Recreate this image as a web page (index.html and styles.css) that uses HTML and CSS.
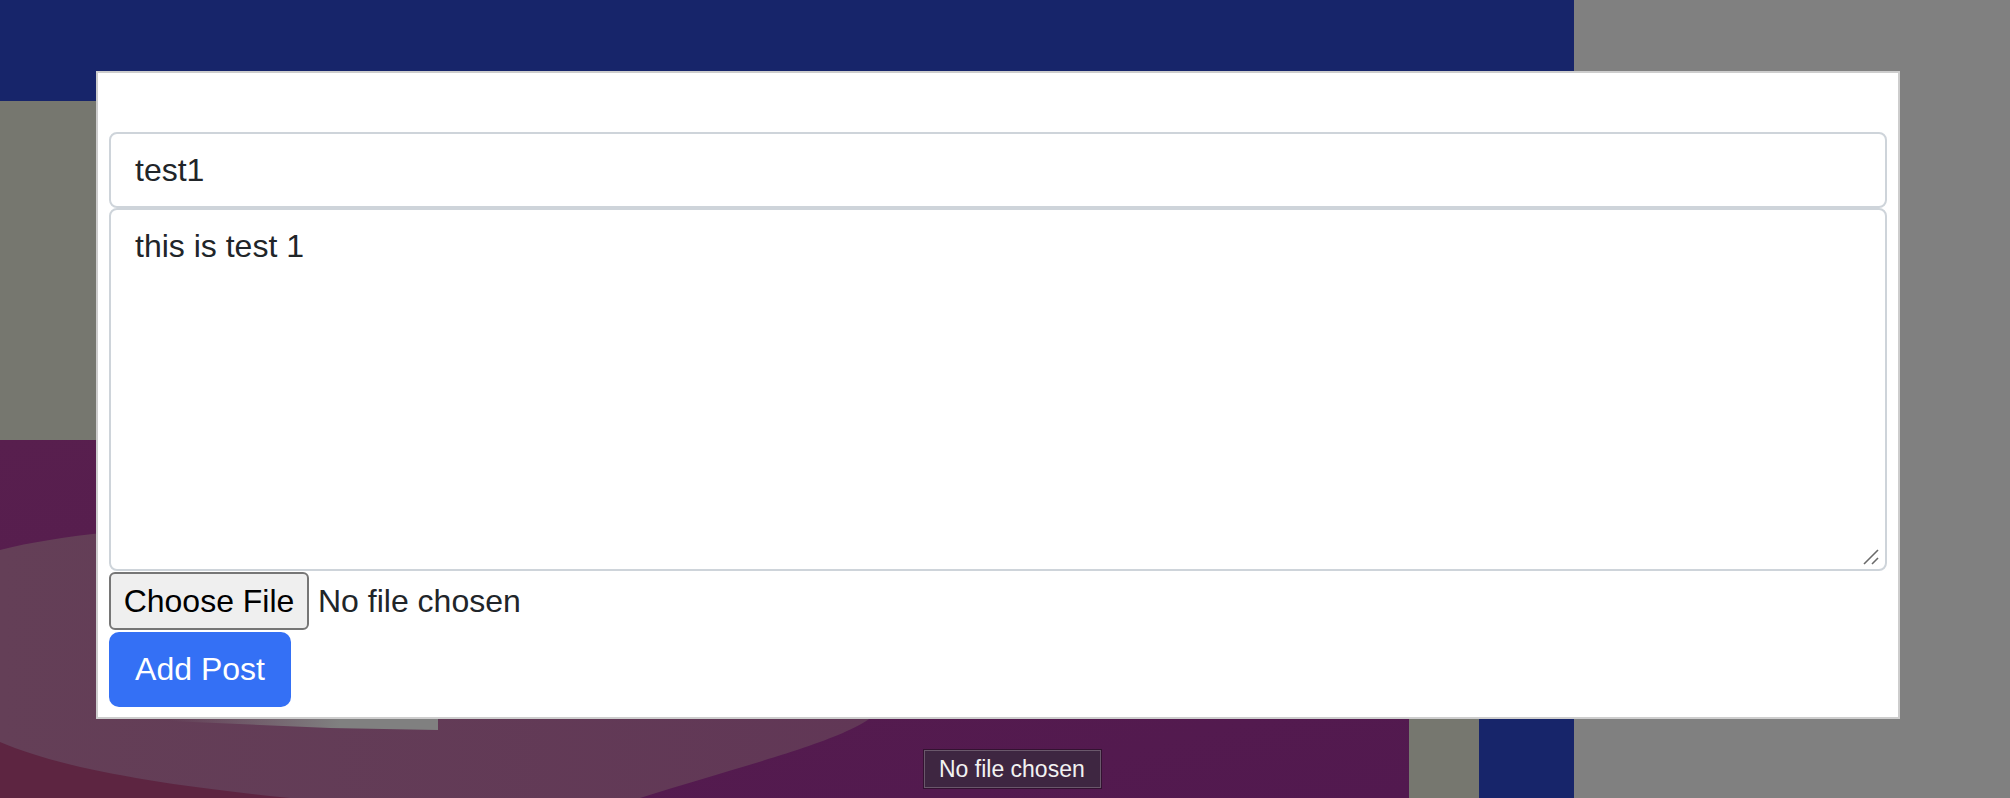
FILE: index.html
```html
<!DOCTYPE html>
<html lang="en">
<head>
<meta charset="utf-8">
<title>Add Post</title>
<link rel="stylesheet" href="styles.css">
</head>
<body>
  <div class="desktop">
    <div class="layer-navy">
      <div class="layer-olive">
        <div class="wallpaper">
          <svg class="wallpaper-art" viewBox="0 0 1409 358" width="1409" height="358" aria-hidden="true">
            <defs>
              <linearGradient id="bandGrad" x1="0" y1="0" x2="1" y2="0">
                <stop offset="0" stop-color="#643f57"/>
                <stop offset="1" stop-color="#613756"/>
              </linearGradient>
              <linearGradient id="patchGrad" x1="170" y1="0" x2="340" y2="0" gradientUnits="userSpaceOnUse">
                <stop offset="0" stop-color="#808080" stop-opacity="0"/>
                <stop offset="1" stop-color="#808080"/>
              </linearGradient>
              <linearGradient id="baseGrad" x1="0" y1="0" x2="1" y2="1">
                <stop offset="0" stop-color="#581f4e"/>
                <stop offset="1" stop-color="#52194f"/>
              </linearGradient>
            </defs>
            <rect x="0" y="0" width="1409" height="358" fill="url(#baseGrad)"/>
            <path d="M0,110 C200,60 700,80 880,260 C890,290 760,320 640,358 L0,358 Z" fill="url(#bandGrad)"/>
            <path d="M0,302 C60,328 160,345 290,358 L0,358 Z" fill="#5d2541"/>
            <polygon points="170,279 438,279 438,290 330,288 170,281" fill="url(#patchGrad)"/>
          </svg>
        </div>
      </div>
    </div>
  </div>

  <div class="modal">
    <div class="form">
      <div class="field field-input">test1</div>
      <div class="field field-textarea">this is test 1
        <svg class="grip" width="20" height="20" viewBox="0 0 20 20" aria-hidden="true">
          <line x1="1" y1="17" x2="15" y2="3" />
          <line x1="9" y1="17" x2="15" y2="11" />
        </svg>
      </div>
      <div class="file-row">
        <span class="file-btn">Choose File</span>
        <span class="file-label">No file chosen</span>
      </div>
      <div class="btn-primary">Add Post</div>
    </div>
  </div>

  <div class="tooltip">No file chosen</div>
</body>
</html>
```

FILE: styles.css
```css
html, body {
  margin: 0;
  padding: 0;
}

body {
  width: 2010px;
  height: 798px;
  overflow: hidden;
  background: #808080;
  font-family: "Liberation Sans", Arial, sans-serif;
  position: relative;
}

.desktop {
  width: 2010px;
  height: 798px;
}

.layer-navy {
  width: 1574px;
  height: 798px;
  box-sizing: border-box;
  padding-top: 101px;
  background: #17256a;
}

.layer-olive {
  width: 1479px;
  height: 697px;
  box-sizing: border-box;
  padding-top: 339px;
  background: #76776f;
}

.wallpaper {
  width: 1409px;
  height: 358px;
  background: #561d4f;
}

.wallpaper-art {
  display: block;
}

.modal {
  position: absolute;
  left: 96px;
  top: 71px;
  width: 1804px;
  height: 648px;
  box-sizing: border-box;
  background: #ffffff;
  border: 2px solid #cdcdcd;
  padding: 59px 11px 0 11px;
}

.form {
  display: flex;
  flex-direction: column;
  align-items: flex-start;
}

.field {
  width: 100%;
  box-sizing: border-box;
  border: 2px solid #ced4da;
  border-radius: 8px;
  padding: 12px 24px;
  font-size: 32px;
  line-height: 48px;
  color: #212529;
  background: #fff;
}

.field-input {
  height: 76px;
}

.field-textarea {
  height: 363px;
  position: relative;
}

.grip {
  position: absolute;
  right: 2px;
  bottom: 2px;
}

.grip line {
  stroke: #6a6a6a;
  stroke-width: 1.6;
}

.file-row {
  margin-top: 1px;
  display: flex;
  align-items: center;
  height: 58px;
}

.file-btn {
  box-sizing: border-box;
  width: 200px;
  height: 58px;
  display: flex;
  align-items: center;
  justify-content: center;
  background: #efefef;
  border: 2px solid #767676;
  border-radius: 6px;
  font-size: 32px;
  color: #000;
}

.file-label {
  margin-left: 9px;
  font-size: 32px;
  color: #212529;
}

.btn-primary {
  margin-top: 2px;
  box-sizing: border-box;
  width: 182px;
  height: 75px;
  display: flex;
  align-items: center;
  justify-content: center;
  background: #3470f5;
  border-radius: 10px;
  color: #ffffff;
  font-size: 32px;
}

.tooltip {
  position: absolute;
  left: 924px;
  top: 750px;
  width: 177px;
  height: 38px;
  box-sizing: border-box;
  display: flex;
  align-items: center;
  padding-left: 14px;
  background: #3e2641;
  border: 1px solid #6a586b;
  box-shadow: 0 0 0 1px rgba(20, 10, 20, 0.5);
  color: #f2f2f2;
  font-size: 23px;
}
```
